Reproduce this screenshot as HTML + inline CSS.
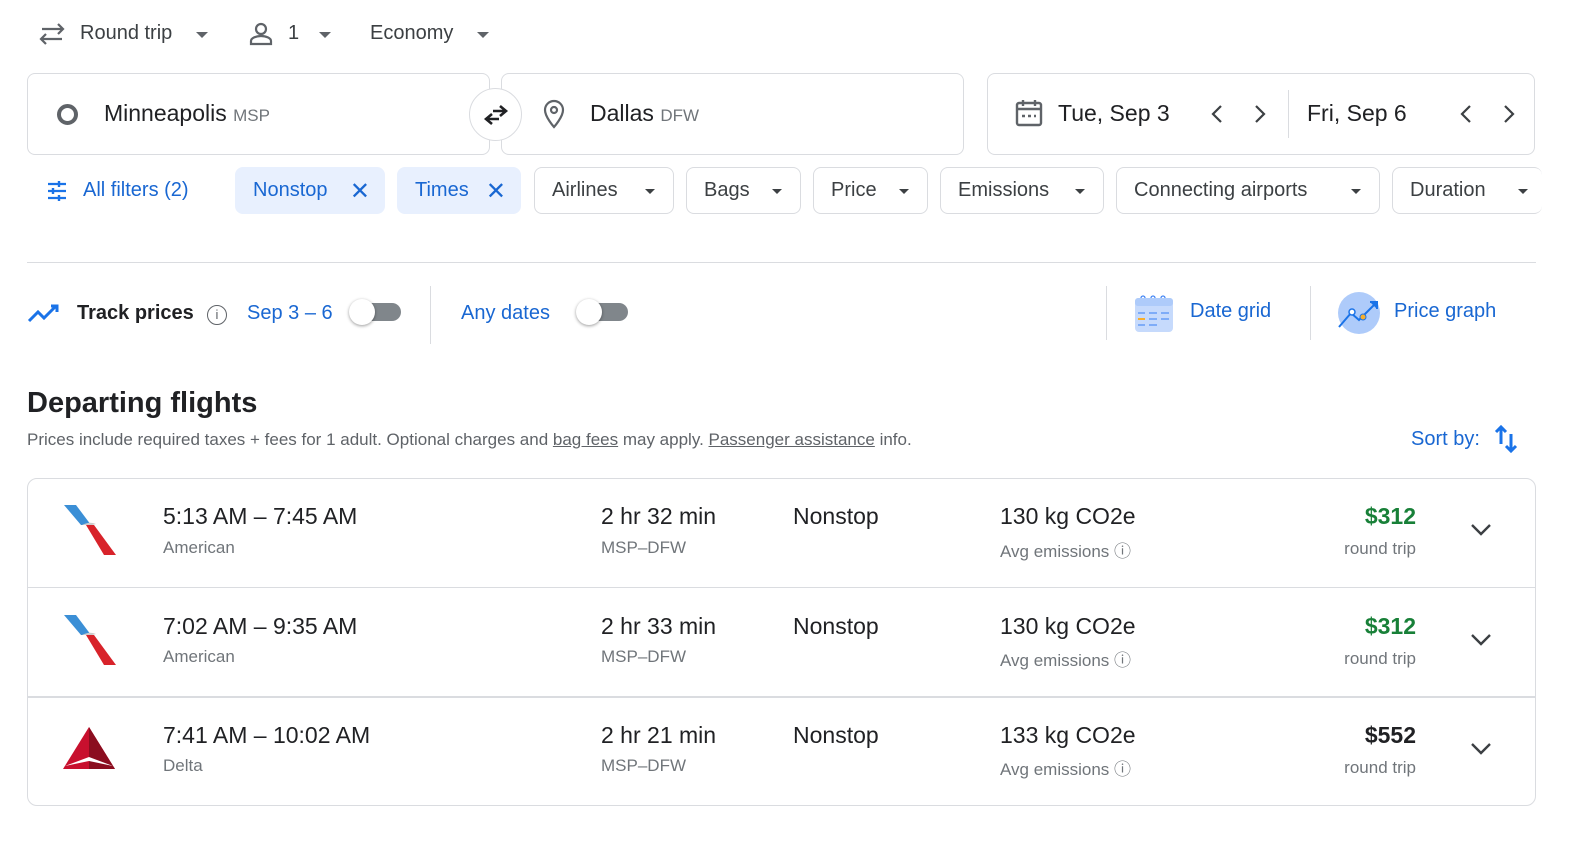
<!DOCTYPE html>
<html><head><style>
*{box-sizing:border-box;margin:0;padding:0}
body{width:1596px;height:864px;background:#fff;font-family:"Liberation Sans",Arial,sans-serif;color:#3c4043;position:relative;overflow:hidden}
.a{position:absolute;white-space:nowrap}
.box{position:absolute;border:1px solid #dadce0;border-radius:8px;background:#fff}
.chip{position:absolute;top:167px;height:47px;border:1px solid #dadce0;border-radius:8px;font-size:20px;color:#3c4043;display:flex;align-items:center;padding-left:17px}
.chip.sel{background:#e8f0fe;border-color:#e8f0fe;color:#1967d2}
.tri{display:inline-block;width:0;height:0;border-left:5px solid transparent;border-right:5px solid transparent;border-top:5px solid #3c4043;position:absolute;right:18px;top:21px}
.blue{color:#1a73e8}
.row{position:absolute;left:28px;width:1506px;height:109px}
.t1{font-size:23px;color:#202124}
.t2{font-size:17px;color:#70757a}
.tog{position:absolute;width:52px;height:24px}
.tog .tr{position:absolute;left:6px;top:4px;width:46px;height:18px;border-radius:9px;background:#80868b}
.tog .k{position:absolute;left:0;top:0;width:26px;height:26px;border-radius:50%;background:#fff;box-shadow:0 1px 3px rgba(0,0,0,.4)}
</style></head><body>
<svg class="a" style="left:38px;top:22px" width="28" height="24" viewBox="0 0 28 24"><path d="M20 2l5 5-5 5M25 7H4M8 12l-5 5 5 5M3 17h21" fill="none" stroke="#5f6368" stroke-width="2.2"/></svg>
<div class="a" style="left:80px;top:22px;font-size:20px">Round trip</div>
<div class="a" style="left:196px;top:32px;border-left:6px solid transparent;border-right:6px solid transparent;border-top:6px solid #5f6368"></div>
<svg class="a" style="left:248px;top:22px" width="26" height="24" viewBox="0 0 26 24"><circle cx="13" cy="7" r="5" fill="none" stroke="#5f6368" stroke-width="2.2"/><path d="M3 22v-3c0-3 5-5 10-5s10 2 10 5v3z" fill="none" stroke="#5f6368" stroke-width="2.2"/></svg>
<div class="a" style="left:288px;top:22px;font-size:20px">1</div>
<div class="a" style="left:319px;top:32px;border-left:6px solid transparent;border-right:6px solid transparent;border-top:6px solid #5f6368"></div>
<div class="a" style="left:370px;top:22px;font-size:20px">Economy</div>
<div class="a" style="left:477px;top:32px;border-left:6px solid transparent;border-right:6px solid transparent;border-top:6px solid #5f6368"></div>
<div class="box" style="left:27px;top:73px;width:463px;height:82px"></div>
<div class="box" style="left:501px;top:73px;width:463px;height:82px"></div>
<div class="box" style="left:987px;top:73px;width:548px;height:82px"></div>
<div class="a" style="left:57px;top:104px;width:21px;height:21px;border:4px solid #5f6368;border-radius:50%"></div>
<div class="a" style="left:104px;top:100px;font-size:23px;color:#202124">Minneapolis <span style="font-size:17px;color:#70757a">MSP</span></div>
<div class="a" style="left:469px;top:88px;width:53px;height:53px;border:1px solid #dadce0;border-radius:50%;background:#fff"></div>
<svg class="a" style="left:481px;top:100px" width="30" height="30" viewBox="0 0 30 30"><path d="M19 6l6 5-6 5M25 11H12M11 14l-6 5 6 5M5 19h13" fill="none" stroke="#202124" stroke-width="2.6"/></svg>
<svg class="a" style="left:542px;top:99px" width="24" height="30" viewBox="0 0 24 30"><path d="M12 2a9 9 0 0 0-9 9c0 7 9 17 9 17s9-10 9-17a9 9 0 0 0-9-9z" fill="none" stroke="#5f6368" stroke-width="2.2"/><circle cx="12" cy="11" r="3" fill="none" stroke="#5f6368" stroke-width="2.2"/></svg>
<div class="a" style="left:590px;top:100px;font-size:23px;color:#202124">Dallas <span style="font-size:17px;color:#70757a">DFW</span></div>
<svg class="a" style="left:1014px;top:98px" width="30" height="30" viewBox="0 0 30 30"><rect x="3" y="5" width="24" height="22" rx="2" fill="none" stroke="#5f6368" stroke-width="2.4"/><path d="M3 11h24M9 2v6M21 2v6" stroke="#5f6368" stroke-width="2.4"/><path d="M8 18h3M14 18h3M20 18h2" stroke="#5f6368" stroke-width="2.4"/></svg>
<div class="a" style="left:1058px;top:100px;font-size:23px;color:#202124">Tue, Sep 3</div>
<svg class="a" style="left:1210px;top:104px" width="14" height="20" viewBox="0 0 14 20"><path d="M11 2L3 10l8 8" fill="none" stroke="#3c4043" stroke-width="2.2"/></svg>
<svg class="a" style="left:1253px;top:104px" width="14" height="20" viewBox="0 0 14 20"><path d="M3 2l8 8-8 8" fill="none" stroke="#3c4043" stroke-width="2.2"/></svg>
<div class="a" style="left:1288px;top:90px;width:1px;height:48px;background:#dadce0"></div>
<div class="a" style="left:1307px;top:100px;font-size:23px;color:#202124">Fri, Sep 6</div>
<svg class="a" style="left:1459px;top:104px" width="14" height="20" viewBox="0 0 14 20"><path d="M11 2L3 10l8 8" fill="none" stroke="#3c4043" stroke-width="2.2"/></svg>
<svg class="a" style="left:1502px;top:104px" width="14" height="20" viewBox="0 0 14 20"><path d="M3 2l8 8-8 8" fill="none" stroke="#3c4043" stroke-width="2.2"/></svg>
<svg class="a" style="left:46px;top:180px" width="22" height="22" viewBox="0 0 22 22"><path d="M2 4h18M2 11h18M2 18h18" stroke="#1a73e8" stroke-width="2.2"/><path d="M13 1v6M7 8v6M13 15v6" stroke="#1a73e8" stroke-width="2.4"/></svg>
<div class="a blue" style="left:83px;top:179px;font-size:20px;color:#1967d2">All filters (2)</div>
<div class="chip sel" style="left:235px;width:150px">Nonstop<span style="position:absolute;right:14px;top:9px;font-size:24px">✕</span></div>
<div class="chip sel" style="left:397px;width:124px">Times<span style="position:absolute;right:14px;top:9px;font-size:24px">✕</span></div>
<div class="chip" style="left:534px;width:140px">Airlines<span class="tri"></span></div>
<div class="chip" style="left:686px;width:115px">Bags<span class="tri"></span></div>
<div class="chip" style="left:813px;width:115px">Price<span class="tri"></span></div>
<div class="chip" style="left:940px;width:164px">Emissions<span class="tri"></span></div>
<div class="chip" style="left:1116px;width:264px">Connecting airports<span class="tri"></span></div>
<div class="chip" style="left:1392px;width:150px;border-right:none">Duration<span class="tri" style="right:14px"></span></div>
<div class="a" style="left:27px;top:262px;width:1509px;height:1px;background:#dadce0"></div>
<svg class="a" style="left:27px;top:303px" width="34" height="20" viewBox="0 0 34 20"><path d="M2 18l9-9 6 6 12-12M24 3h6v6" fill="none" stroke="#1a73e8" stroke-width="3"/></svg>
<div class="a" style="left:77px;top:302px;font-size:20px;color:#202124;font-weight:bold">Track prices</div>
<div class="a" style="left:207px;top:305px;width:20px;height:20px;border:1.8px solid #5f6368;border-radius:50%;font-size:13px;text-align:center;line-height:17px;color:#5f6368">i</div>
<div class="a blue" style="left:247px;top:302px;font-size:20px;color:#1967d2">Sep 3 – 6</div>
<div class="tog" style="left:349px;top:299px"><div class="tr"></div><div class="k"></div></div>
<div class="a" style="left:430px;top:286px;width:1px;height:58px;background:#dadce0"></div>
<div class="a blue" style="left:461px;top:302px;font-size:20px;color:#1967d2">Any dates</div>
<div class="tog" style="left:576px;top:299px"><div class="tr"></div><div class="k"></div></div>
<div class="a" style="left:1106px;top:286px;width:1px;height:54px;background:#dadce0"></div>
<svg class="a" style="left:1134px;top:292px" width="40" height="42" viewBox="0 0 40 42"><rect x="1" y="6" width="38" height="34" rx="4" fill="#c6dafc"/><rect x="1" y="6" width="38" height="8" rx="3" fill="#aecbfa"/><path d="M7 6a2 2 0 1 1 4 0M17 6a2 2 0 1 1 4 0M27 6a2 2 0 1 1 4 0" fill="none" stroke="#4285f4" stroke-width="1.3"/><path d="M4 21h7M15 21h8M27 21h8M15 27h8M27 27h8M4 33h7M15 33h8" stroke="#669df6" stroke-width="1.6"/><path d="M4 27h7" stroke="#f6ae2d" stroke-width="2"/></svg>
<div class="a blue" style="left:1190px;top:300px;font-size:20px;color:#1967d2">Date grid</div>
<div class="a" style="left:1310px;top:286px;width:1px;height:54px;background:#dadce0"></div>
<svg class="a" style="left:1335px;top:289px" width="48" height="46" viewBox="0 0 48 46"><circle cx="24" cy="24" r="21" fill="#aecbfa"/><path d="M4 38l12-14 8 7 17-17" fill="none" stroke="#1a73e8" stroke-width="2"/><path d="M35 13h7v7" fill="#1a73e8" stroke="#1a73e8" stroke-width="2"/><circle cx="17" cy="23" r="3" fill="#fff" stroke="#1a73e8" stroke-width="1.5"/><circle cx="28" cy="28" r="3" fill="#f6ae2d" stroke="#1a73e8" stroke-width="1"/></svg>
<div class="a blue" style="left:1394px;top:300px;font-size:20px;color:#1967d2">Price graph</div>
<div class="a" style="left:27px;top:387px;font-size:29px;color:#202124;font-weight:bold">Departing flights</div>
<div class="a" style="left:27px;top:430px;font-size:17px;color:#5f6368">Prices include required taxes + fees for 1 adult. Optional charges and <u>bag fees</u> may apply. <u>Passenger assistance</u> info.</div>
<div class="a blue" style="left:1411px;top:428px;font-size:20px;color:#1967d2">Sort by:</div>
<svg class="a" style="left:1493px;top:424px" width="26" height="30" viewBox="0 0 26 30"><path d="M8 20V3M3 8l5-5 5 5M18 10v17M13 22l5 5 5-5" fill="none" stroke="#1a73e8" stroke-width="3"/></svg>
<div class="box" style="left:27px;top:478px;width:1509px;height:328px;border-radius:10px"></div>
<div class="a" style="left:28px;top:587px;width:1507px;height:1px;background:#dadce0"></div>
<div class="a" style="left:28px;top:696px;width:1507px;height:2px;background:#dadce0"></div>

<div class="row" style="top:478px">
<svg class="a" style="left:34px;top:25px" width="56" height="52" viewBox="0 0 56 52"><path d="M2 2h12l15 20h-10z" fill="#3b8fd6"/><path d="M24 22h8l22 30h-12z" fill="#d8232a"/><path d="M20 22q8-4 14-1l-4 1z" fill="#ccc"/></svg>
<div class="a t1" style="left:135px;top:25px">5:13 AM – 7:45 AM</div><div class="a t2" style="left:135px;top:60px">American</div>
<div class="a t1" style="left:573px;top:25px">2 hr 32 min</div><div class="a t2" style="left:573px;top:60px">MSP–DFW</div>
<div class="a t1" style="left:765px;top:25px">Nonstop</div>
<div class="a t1" style="left:972px;top:25px">130 kg CO2e</div><div class="a t2" style="left:972px;top:59px">Avg emissions ⓘ</div>
<div class="a t1" style="right:118px;top:25px;color:#188038;font-weight:bold">$312</div><div class="a t2" style="right:118px;top:61px">round trip</div>
<svg class="a" style="left:1442px;top:45px" width="22" height="14" viewBox="0 0 22 14"><path d="M2 2l9 9 9-9" fill="none" stroke="#3c4043" stroke-width="2.4"/></svg>
</div>
<div class="row" style="top:588px">
<svg class="a" style="left:34px;top:25px" width="56" height="52" viewBox="0 0 56 52"><path d="M2 2h12l15 20h-10z" fill="#3b8fd6"/><path d="M24 22h8l22 30h-12z" fill="#d8232a"/><path d="M20 22q8-4 14-1l-4 1z" fill="#ccc"/></svg>
<div class="a t1" style="left:135px;top:25px">7:02 AM – 9:35 AM</div><div class="a t2" style="left:135px;top:59px">American</div>
<div class="a t1" style="left:573px;top:25px">2 hr 33 min</div><div class="a t2" style="left:573px;top:59px">MSP–DFW</div>
<div class="a t1" style="left:765px;top:25px">Nonstop</div>
<div class="a t1" style="left:972px;top:25px">130 kg CO2e</div><div class="a t2" style="left:972px;top:58px">Avg emissions ⓘ</div>
<div class="a t1" style="right:118px;top:25px;color:#188038;font-weight:bold">$312</div><div class="a t2" style="right:118px;top:61px">round trip</div>
<svg class="a" style="left:1442px;top:45px" width="22" height="14" viewBox="0 0 22 14"><path d="M2 2l9 9 9-9" fill="none" stroke="#3c4043" stroke-width="2.4"/></svg>
</div>
<div class="row" style="top:697px">
<svg class="a" style="left:34px;top:28px" width="54" height="46" viewBox="0 0 54 46"><path d="M27 2L1 44h52z" fill="#c8102e"/><path d="M27 2v42h26z" fill="#8b0d1f"/><path d="M3 41l24-9 24 9-24-5z" fill="#fff"/></svg>
<div class="a t1" style="left:135px;top:25px">7:41 AM – 10:02 AM</div><div class="a t2" style="left:135px;top:59px">Delta</div>
<div class="a t1" style="left:573px;top:25px">2 hr 21 min</div><div class="a t2" style="left:573px;top:59px">MSP–DFW</div>
<div class="a t1" style="left:765px;top:25px">Nonstop</div>
<div class="a t1" style="left:972px;top:25px">133 kg CO2e</div><div class="a t2" style="left:972px;top:58px">Avg emissions ⓘ</div>
<div class="a t1" style="right:118px;top:25px;color:#202124;font-weight:bold">$552</div><div class="a t2" style="right:118px;top:61px">round trip</div>
<svg class="a" style="left:1442px;top:45px" width="22" height="14" viewBox="0 0 22 14"><path d="M2 2l9 9 9-9" fill="none" stroke="#3c4043" stroke-width="2.4"/></svg>
</div>
</body></html>
